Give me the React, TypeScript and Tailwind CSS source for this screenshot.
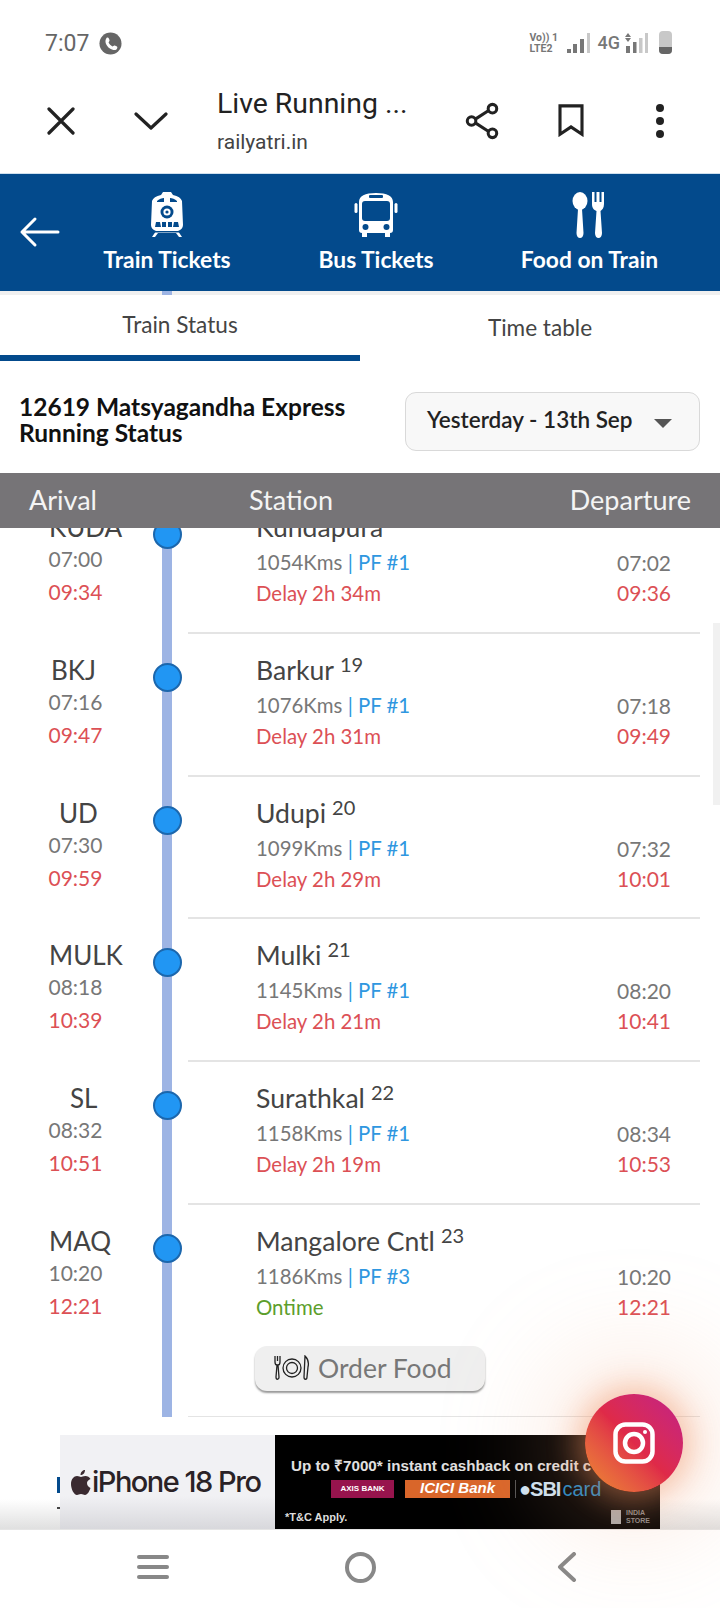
const LATO = "font-['Lato',sans-serif]";

interface Stop {
  code: string;
  codeClass: string;
  name: string;
  num?: number;
  km: string;
  pf: string;
  status: string;
  ontime?: boolean;
  arr: string;
  arrLive: string;
  dep: string;
  depLive: string;
}

const stops: Stop[] = [
  { code: "KUDA", codeClass: "pl-[49px]", name: "Kundapura", km: "1054Kms", pf: "PF #1", status: "Delay 2h 34m", arr: "07:00", arrLive: "09:34", dep: "07:02", depLive: "09:36" },
  { code: "BKJ", codeClass: "pl-[51px]", name: "Barkur", num: 19, km: "1076Kms", pf: "PF #1", status: "Delay 2h 31m", arr: "07:16", arrLive: "09:47", dep: "07:18", depLive: "09:49" },
  { code: "UD", codeClass: "pl-[59px]", name: "Udupi", num: 20, km: "1099Kms", pf: "PF #1", status: "Delay 2h 29m", arr: "07:30", arrLive: "09:59", dep: "07:32", depLive: "10:01" },
  { code: "MULK", codeClass: "pl-[49px]", name: "Mulki", num: 21, km: "1145Kms", pf: "PF #1", status: "Delay 2h 21m", arr: "08:18", arrLive: "10:39", dep: "08:20", depLive: "10:41" },
  { code: "SL", codeClass: "pl-[70px]", name: "Surathkal", num: 22, km: "1158Kms", pf: "PF #1", status: "Delay 2h 19m", arr: "08:32", arrLive: "10:51", dep: "08:34", depLive: "10:53" },
  { code: "MAQ", codeClass: "pl-[49px]", name: "Mangalore Cntl", num: 23, km: "1186Kms", pf: "PF #3", status: "Ontime", ontime: true, arr: "10:20", arrLive: "12:21", dep: "10:20", depLive: "12:21" },
];

function TrainIcon() {
  return (
    <svg width="36" height="48" viewBox="0 0 36 48" fill="#fff">
      <path d="M14 1h8l2 3c5 1 8 3 9 6l1 24c0 3-2 5-5 6l4 6h-3l-3-4H9l-3 4H3l4-6c-3-1-5-3-5-6l1-24c1-3 4-5 9-6z" />
      <path d="M8 10c2-2 5-3 7-3v4H8zM28 10c-2-2-5-3-7-3v4h7z" fill="#034a8c" />
      <circle cx="18" cy="21" r="6.5" fill="#034a8c" />
      <circle cx="18" cy="21" r="3.6" fill="#fff" />
      <circle cx="18" cy="21" r="1.6" fill="#034a8c" />
      <path d="M7 31h4l1 5H6zM13 31h4v5h-4zM19 31h4v5h-4zM25 31h4l1 5h-6zM3 40h30v1.5H3z" fill="#034a8c" />
    </svg>
  );
}

function BusIcon() {
  return (
    <svg width="44" height="48" viewBox="0 0 44 48" fill="#fff">
      <path d="M5 11c0-6 6-9 17-9s17 3 17 9v28c0 2-1 3-3 3v4h-5v-4H13v4H8v-4c-2 0-3-1-3-3z" />
      <path d="M8 13c0-2 1-3 3-3h22c2 0 3 1 3 3v14c0 2-1 3-3 3H11c-2 0-3-1-3-3z" fill="#034a8c" />
      <rect x="15" y="4" width="14" height="3" rx="1" fill="#034a8c" />
      <circle cx="11.5" cy="36" r="3" fill="#034a8c" />
      <circle cx="32.5" cy="36" r="3" fill="#034a8c" />
      <rect x="0.5" y="12" width="3" height="10" rx="1.5" />
      <rect x="40.5" y="12" width="3" height="10" rx="1.5" />
    </svg>
  );
}

function FoodIcon() {
  return (
    <svg width="36" height="48" viewBox="0 0 36 48" fill="#fff">
      <ellipse cx="8" cy="10" rx="7.5" ry="9" />
      <path d="M6 18h4l1.500 24c0 3-1.500 5-3.500 5s-3.500-2-3.500-5z" />
      <path d="M20 1h2.500v10h2V1h3v10h2V1H32v12c0 4-2 6-3.500 7l1.500 22c0 3-1.500 5-3.500 5s-3.500-2-3.500-5l1.500-22C22 19 20 17 20 13z" />
    </svg>
  );
}

function TopBar() {
  return (
    <div className="h-[291px] shrink-0 bg-white">
      <div className="flex h-[86px] items-start justify-between pl-[45px] pr-[48px] pt-[30px] font-['Roboto',sans-serif] text-[#666]">
        <div className="flex items-center gap-[10px]">
          <span className="text-[23px] leading-[27px]">7:07</span>
          <svg width="23" height="23" viewBox="0 0 24 24">
            <circle cx="12" cy="12" r="11.500" fill="#666" />
            <path d="M8 6c2-1 3 2 3 3l-1 2c1 2 2 3 4 4l2-1c1 0 4 1 3 3-1 3-5 2-8 0-3-2-6-7-3-11z" fill="#fff" />
          </svg>
        </div>
        <div className="mt-[1px] flex items-center">
          <div className="flex w-[26px] flex-col whitespace-nowrap text-[10.500px] font-bold leading-[11px] text-[#777]">
            <span>Vo)) 1</span>
            <span>LTE2</span>
          </div>
          <svg width="24" height="22" viewBox="0 0 24 22" className="ml-[11px]">
            <rect x="0" y="17" width="4" height="4" fill="#777" />
            <rect x="6" y="12" width="4" height="9" fill="#777" />
            <rect x="13" y="7" width="4" height="14" fill="#777" />
            <rect x="20" y="1" width="3" height="20" fill="#c8c8c8" />
          </svg>
          <span className="ml-[7px] text-[18px] font-medium leading-[22px] text-[#777]">4G</span>
          <svg width="24" height="22" viewBox="0 0 24 22" className="ml-[5px]">
            <path d="M3 1l3 4H0zM3 10L0 6h6z" fill="#777" />
            <rect x="1" y="14" width="4" height="7" fill="#777" />
            <rect x="8" y="10" width="3.500" height="11" fill="#777" />
            <rect x="14" y="6" width="3.500" height="15" fill="#c8c8c8" />
            <rect x="20" y="1" width="3" height="20" fill="#c8c8c8" />
          </svg>
          <div className="ml-[10px] flex h-[23px] w-[13px] flex-col justify-end overflow-hidden rounded-[4px] bg-[#c8c8c8]">
            <div className="h-[7px] bg-[#666]" />
          </div>
        </div>
      </div>
      <div className="flex h-[87px] items-center pb-[18px] font-['Roboto',sans-serif]">
        <div className="flex w-[217px] items-center pl-[47px]">
          <svg width="28" height="28" viewBox="0 0 28 28" stroke="#222" strokeWidth="3.200" strokeLinecap="round">
            <path d="M2 2l24 24M26 2L2 26" />
          </svg>
          <svg width="34" height="20" viewBox="0 0 34 20" fill="none" stroke="#222" strokeWidth="3.200" strokeLinecap="round" strokeLinejoin="round" className="ml-[59px]">
            <path d="M2 3l15 14L32 3" />
          </svg>
        </div>
        <div className="flex w-[247px] flex-col">
          <span className="text-[28.400px] leading-[34px] text-[#222]">Live Running ...</span>
          <span className="mt-[8px] text-[21px] leading-[26px] text-[#444]">railyatri.in</span>
        </div>
        <svg width="36" height="38" viewBox="0 0 36 40" fill="none" stroke="#222" strokeWidth="3.200">
          <circle cx="29" cy="7" r="4.500" />
          <circle cx="7" cy="20" r="4.500" />
          <circle cx="29" cy="33" r="4.500" />
          <path d="M11 18l14-9M11 22l14 9" />
        </svg>
        <svg width="28" height="33" viewBox="0 0 28 36" fill="none" stroke="#222" strokeWidth="3.400" className="ml-[57px]">
          <path d="M2 2h24v31l-12-8-12 8z" />
        </svg>
        <div className="ml-[71px] flex flex-col gap-[5px]">
          <div className="size-[8px] rounded-full bg-[#222]" />
          <div className="size-[8px] rounded-full bg-[#222]" />
          <div className="size-[8px] rounded-full bg-[#222]" />
        </div>
      </div>
      <div className="flex h-[118px] items-start border-t-[1px] border-[#cfe0ee] bg-[#034a8c] text-white">
        <div className="flex h-full w-[103px] items-center pb-[1px] pl-[19px]">
          <svg width="41" height="32" viewBox="0 0 41 32" fill="none" stroke="#fff" strokeWidth="3" strokeLinecap="round" strokeLinejoin="round">
            <path d="M39 16H3M16 3L3 16l13 13" />
          </svg>
        </div>
        <NavItem icon={<TrainIcon />} label="Train Tickets" className="w-[128px]" />
        <NavItem icon={<BusIcon />} label="Bus Tickets" className="ml-[88px] w-[114px]" />
        <NavItem icon={<FoodIcon />} label="Food on Train" className="ml-[89px] w-[135px]" />
      </div>
    </div>
  );
}

function NavItem({ icon, label, className }: { icon: React.ReactNode; label: string; className: string }) {
  return (
    <div className={`flex flex-col items-center pt-[17px] ${className}`}>
      <div className="flex h-[48px] items-center">{icon}</div>
      <span className={`mt-[6px] whitespace-nowrap ${LATO} text-[22.800px] font-bold leading-[28px]`}>{label}</span>
    </div>
  );
}

function Tabs() {
  return (
    <div className={`shrink-0 ${LATO}`}>
      <div className="flex h-[4px] bg-[#f0f0f0] pl-[162px]">
        <div className="h-full w-[10px] bg-[#9db4e4]" />
      </div>
      <div className="flex h-[66px] text-[22.600px] text-[#444]">
        <div className="flex w-[360px] justify-center border-b-[6px] border-[#034a8c] pt-[15px] leading-[30px]">Train Status</div>
        <div className="flex w-[360px] justify-center pt-[18px] leading-[30px]">Time table</div>
      </div>
    </div>
  );
}

function TitleRow() {
  return (
    <div className={`flex h-[112px] shrink-0 items-start justify-between pl-[19px] pr-[20px] ${LATO}`}>
      <h1 className="mt-[33px] text-[24.500px] font-bold leading-[26px] text-[#111]">
        12619 Matsyagandha Express
        <br />
        Running Status
      </h1>
      <div className="mt-[31px] flex h-[59px] w-[295px] items-center justify-between rounded-[11px] border border-[#d9d9d9] bg-[#f8f8f8] pb-[3px] pl-[21px] pr-[27px]">
        <span className="text-[22.500px] font-semibold text-[#222]">Yesterday - 13th Sep</span>
        <div className="mt-[6px] size-0 border-x-[9px] border-t-[9px] border-x-transparent border-t-[#555]" />
      </div>
    </div>
  );
}

function StopRow({ stop, last }: { stop: Stop; last?: boolean }) {
  return (
    <div className={`flex ${last ? "h-[213px]" : "h-[142.8px]"}`}>
      <div className="w-[162px] shrink-0">
        <div className={`mt-[20px] h-[32px] whitespace-nowrap text-[26px] leading-[32px] text-[#444] ${stop.codeClass}`}>{stop.code}</div>
        <div className="mt-[3px] pl-[48.500px] text-[21px] leading-[26px] text-[#777]">{stop.arr}</div>
        <div className="mt-[7px] pl-[48.500px] text-[21px] leading-[26px] text-[#dc5055]">{stop.arrLive}</div>
      </div>
      <div className="relative w-[10px] shrink-0 bg-[#9db4e4]">
        <div className="absolute left-[-9.500px] top-[29px] size-[29px] rounded-full border-2 border-[#1c67ad] bg-[#2196f3]" />
      </div>
      <div className="ml-[16px] w-[512px] border-b-2 border-[#e4e4e4]">
        <div className="flex">
          <div className="ml-[68px] flex-1">
            <div className="mt-[20px] flex h-[32px] items-start whitespace-nowrap text-[26.600px] leading-[32px] text-[#444]">
              {stop.name}
              {stop.num && <span className="ml-[6px] mt-[-6px] text-[20px] leading-[32px]">{stop.num}</span>}
            </div>
            <div className="mt-[6px] text-[20.400px] leading-[26px] text-[#777]">
              {stop.km} <span className="text-[#2f97e0]">| {stop.pf}</span>
            </div>
            <div className={`mt-[5px] text-[20.400px] leading-[26px] ${stop.ontime ? "text-[#5c9e2c]" : "text-[#dc5055]"}`}>{stop.status}</div>
          </div>
          <div className="mr-[29px] mt-[59px] flex flex-col items-end text-[21px] leading-[26px]">
            <span className="text-[#777]">{stop.dep}</span>
            <span className="mt-[4px] text-[#dc5055]">{stop.depLive}</span>
          </div>
        </div>
        {last && (
          <div className="ml-[67px] mt-[26px] flex h-[45px] w-[230px] items-center rounded-[12px] bg-[#efefef] pl-[19px] shadow-[0_2px_2px_#999]">
            <svg width="36" height="26" viewBox="0 0 36 26" fill="none" stroke="#222" strokeWidth="1.300">
              <path d="M1 1v6c0 2 1 3 2 3l-1 12c0 3 3 3 3 0L4 10c1 0 2-1 2-3V1M3.500 1v5" />
              <circle cx="18" cy="13" r="9" />
              <circle cx="18" cy="13" r="5.500" />
              <path d="M31 1c3 3 4 7 3 11l-1 10c0 3-3 3-3 0z" />
            </svg>
            <span className="ml-[8px] text-[26.500px] leading-[32px] text-[#777]">Order Food</span>
          </div>
        )}
      </div>
    </div>
  );
}

function Timeline() {
  return (
    <div className={`relative h-[944px] shrink-0 overflow-hidden ${LATO}`}>
      <div className="relative z-10 flex h-[55px] items-center justify-between bg-[#767477] pl-[29px] pr-[29px] text-[27px] text-[#f4f4f4]">
        <span className="w-[220px]">Arival</span>
        <span className="flex-1">Station</span>
        <span>Departure</span>
      </div>
      <div className="mt-[-37px] flex flex-col">
        {stops.map((s, i) => (
          <StopRow key={s.code} stop={s} last={i === stops.length - 1} />
        ))}
      </div>
      <div className="absolute right-0 top-[150px] h-[182px] w-[7px] bg-[#f1f1f1]" />
    </div>
  );
}

function Ad() {
  return (
    <div className="relative flex-1">
      <div className="absolute inset-x-0 bottom-0 h-[30px] bg-gradient-to-b from-transparent to-[#d8d8d8]/80" />
      <div className="absolute left-[57px] top-[60px] h-[16px] w-[3px] bg-[#034a8c]" />
      <div className="absolute left-[57px] top-[90px] h-[2px] w-[3px] bg-[#444]" />
      <div className="relative ml-[60px] mt-[18px] flex h-[94px] w-[600px]">
        <div className="flex w-[215px] items-center bg-gradient-to-b from-[#f1f1f4] from-65% to-[#d8d8dc] pl-[11px]">
          <svg width="20" height="26" viewBox="0 0 20 26" fill="#3a2a30">
            <path d="M14 1c0 3-2 5-4.500 5C9.500 3 12 1 14 1zM16 14c0 3 2 4 3.500 5-1 3-3 7-5.500 7-1.500 0-2-1-4-1s-2.500 1-4 1C3 26 0 20 0 15c0-5 3-8 6-8 2 0 3 1 4 1s2-1 4.500-1c2 0 4 1 5 3-2 1-3.500 2-3.500 4z" />
          </svg>
          <span className="ml-[1px] whitespace-nowrap font-['Inter',sans-serif] text-[29px] font-medium leading-[36px] tracking-[-1.500px] text-[#2a2226]">iPhone 18 Pro</span>
        </div>
        <div className="w-[385px] bg-black pl-[16px] pt-[21px] font-['Liberation_Sans',sans-serif] text-white">
          <div className="whitespace-nowrap text-[15.200px] font-bold leading-[20px] text-[#e0e0e0]">Up to ₹7000* instant cashback on credit c</div>
          <div className="mt-[3px] flex h-[19px] items-center">
            <div className="ml-[40px] flex h-[18px] w-[63px] items-center justify-center bg-[#97144d] text-[8px] font-bold">AXIS BANK</div>
            <div className="ml-[11px] flex h-[18px] w-[105px] items-center justify-center bg-[#d9662a] text-[15px] font-bold italic">ICICI Bank</div>
            <div className="ml-[5px] mr-[3px] h-[18px] w-px bg-[#555]" />
            <span className="text-[20px] font-bold leading-[20px] tracking-[-1px] text-[#cfe4f5]">●SBI</span>
            <span className="ml-[2px] text-[20px] leading-[20px] text-[#1e88c9]">card</span>
          </div>
          <div className="ml-[-6px] mt-[11px] flex items-center justify-between pr-[10px]">
            <span className="text-[11px] font-bold text-[#ddd]">*T&amp;C Apply.</span>
            <div className="flex items-center gap-[5px]">
              <div className="h-[14px] w-[10px] bg-[#aaa]" />
              <span className="text-[7px] font-bold leading-[8px] text-[#888]">INDIA<br />STORE</span>
            </div>
          </div>
        </div>
      </div>
    </div>
  );
}

function BottomNav() {
  return (
    <div className="flex h-[79px] shrink-0 items-center border-t border-[#e5e5e5] bg-white pb-[4px]">
      <div className="ml-[137px] flex w-[32px] flex-col gap-[6px]">
        <div className="h-[4px] rounded-full bg-[#888]" />
        <div className="h-[4px] rounded-full bg-[#888]" />
        <div className="h-[4px] rounded-full bg-[#888]" />
      </div>
      <div className="ml-[176px] size-[31px] rounded-full border-[4px] border-[#888]" />
      <svg width="20" height="30" viewBox="0 0 20 30" fill="none" stroke="#888" strokeWidth="4" strokeLinecap="round" strokeLinejoin="round" className="ml-[181px]">
        <path d="M17 2L3 15l14 13" />
      </svg>
    </div>
  );
}

export default function App() {
  return (
    <div className="relative flex h-[1608px] w-[720px] flex-col overflow-hidden bg-white">
      <TopBar />
      <Tabs />
      <TitleRow />
      <Timeline />
      <Ad />
      <BottomNav />
      <div className="absolute left-[585px] top-[1394px] flex size-[98px] items-center justify-center rounded-full bg-gradient-to-tr from-[#ec8a2c] via-[#df2a48] to-[#c21f86] shadow-[0_0_30px_8px_rgba(240,140,90,0.45),0_0_110px_40px_rgba(245,170,130,0.25)]">
        <svg width="42" height="42" viewBox="0 0 42 42" fill="none" stroke="#fff" strokeWidth="4.500">
          <rect x="2.500" y="2.500" width="37" height="37" rx="10" />
          <circle cx="21" cy="21" r="9" />
          <circle cx="32" cy="10" r="2" fill="#fff" stroke="none" />
        </svg>
      </div>
    </div>
  );
}
